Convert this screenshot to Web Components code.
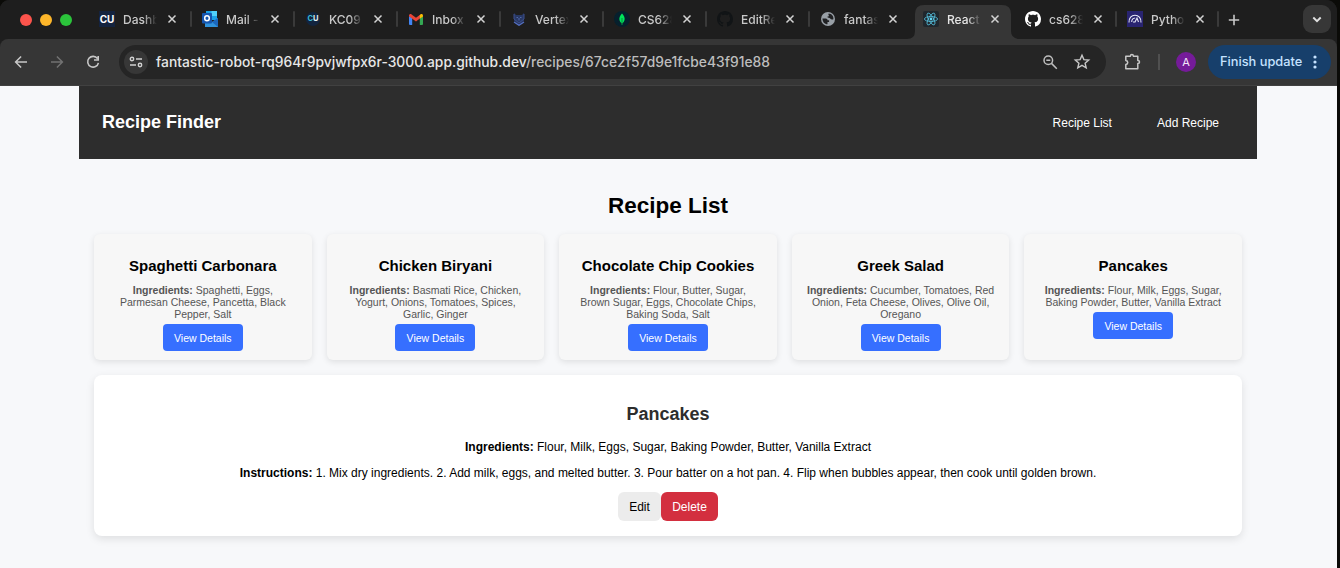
<!DOCTYPE html>
<html lang="en">
<head>
<meta charset="utf-8">
<title>Recipe Finder</title>
<style>
body{margin:0;background:#0b0b08;font-family:"Liberation Sans",Arial,sans-serif;overflow:hidden}
</style>
</head>
<body>
<browser-window></browser-window>
<script>
const define = (name, html) => customElements.define(name, class extends HTMLElement {
  constructor() {
    super();
    this.attachShadow({mode: 'open'});
  }
  connectedCallback() {
    const t = document.createElement('template');
    t.innerHTML = typeof html === 'function' ? html(this) : html;
    this.shadowRoot.replaceChildren(t.content.cloneNode(true));
  }
});

const github = fill => `<svg width="16" height="16" viewBox="0 0 16 16"><path fill="${fill}" d="M8 0C3.58 0 0 3.58 0 8c0 3.54 2.29 6.53 5.47 7.59.4.07.55-.17.55-.38 0-.19-.01-.82-.01-1.49-2.01.37-2.53-.49-2.69-.94-.09-.23-.48-.94-.82-1.13-.28-.15-.68-.52-.01-.53.63-.01 1.08.58 1.23.82.72 1.21 1.87.87 2.33.66.07-.52.28-.87.51-1.07-1.78-.2-3.64-.89-3.64-3.95 0-.87.31-1.59.82-2.15-.08-.2-.36-1.02.08-2.12 0 0 .67-.21 2.2.82.64-.18 1.32-.27 2-.27s1.36.09 2 .27c1.53-1.04 2.2-.82 2.2-.82.44 1.1.16 1.92.08 2.12.51.56.82 1.27.82 2.15 0 3.07-1.87 3.75-3.65 3.95.29.25.54.73.54 1.48 0 1.07-.01 1.93-.01 2.2 0 .21.15.46.55.38A8.01 8.01 0 0 0 16 8c0-4.42-3.58-8-8-8z"/></svg>`;

const favicons = {
  cu: `<div style="width:16px;height:16px;background:#14233f;color:#fff;font:700 10px/16px Inter,sans-serif;text-align:center;letter-spacing:-.2px">CU</div>`,
  cuRound: `<div style="width:14px;height:14px;border-radius:50%;background:#12243f;color:#e8f2f4;font:700 7.500px/14px Inter,sans-serif;text-align:center"><span style="color:#39b9d6">C</span>U</div>`,
  outlook: `<svg width="16" height="16" viewBox="0 0 16 16"><path fill="#1ba1e8" d="M4 0h11v9H4z"/><path fill="#50d0fb" d="M9.500 0h5.500v5h-5.500z"/><path fill="#0d5fb8" d="M4 5h5.500v5H4z"/><path fill="#2f93dc" d="M3 8l7 3 6-4v9H3z"/><path fill="#1c67bd" d="M10 11l6-4v9z"/><rect y="2" width="10" height="10.500" rx="1" fill="#1656af"/><ellipse cx="5" cy="7.200" rx="2.300" ry="2.500" fill="none" stroke="#fff" stroke-width="1.500"/></svg>`,
  gmail: `<svg width="14" height="11" viewBox="0 0 14 11"><path fill="#4285f4" d="M0 2l3.200 2.300V11H1a1 1 0 0 1-1-1z"/><path fill="#34a853" d="M14 2l-3.200 2.300V11H13a1 1 0 0 0 1-1z"/><path fill="#ea4335" d="M0 1.600C0 .2 1.500-.4 2.600.4L7 3.700 11.400.4l-.6 4.200L7 7.500 0 2.300z"/><path fill="#fbbc04" d="M10.800 1l.6-.5C12.500-.4 14 .2 14 1.600v.8l-3.200 2.300z"/></svg>`,
  vertex: `<svg width="12" height="13" viewBox="0 0 12 13" fill="none"><path d="M1 0l2 2h6l2-2v8l-5 4-5-4z" fill="#283864"/><path d="M1 9l5 3.300L11 9" stroke="#5570c4" stroke-width="1.300"/><path d="M1 1v5l5 4 5-4V1" stroke="#3c4f8c"/><path d="M3.500 4.500h1.500M7 4.500h1.500M6 5v2.500" stroke="#5268a8"/></svg>`,
  mongo: `<svg width="16" height="16"><circle cx="8" cy="8" r="8" fill="#06202d"/><path d="M8 2.500c4 4 3 8 0 10-3-2-4-6 0-10z" fill="#00e65b"/><path d="M8 7v7" stroke="#078b43"/></svg>`,
  githubDark: github('#111416'),
  github: github('#fff'),
  globe: `<svg width="14" height="14" viewBox="0 0 14 14"><circle cx="7" cy="7" r="7" fill="#989fa6"/><path d="M1.500 6.500h3.200c1.400 0 1.800.8 1.800 1.800h1.600v1.600H6.500v2.400c-3 0-5-2.500-5-5.800zM7.700 1.500c-.8 1.300.2 1.700.2 2.200 0 .8-1.500.5-1.500 1.300 0 1 2.200.3 2.800 1.500.6 1.100 1.800 1.200 3.200.8C12.800 4 10.500 1.600 7.700 1.500z" fill="#202123"/></svg>`,
  react: `<svg width="16" height="16"><rect width="16" height="16" rx="2" fill="#20272d"/><g fill="none" stroke="#53b9d6" stroke-width=".85"><ellipse cx="8" cy="8" rx="6.600" ry="2.500"/><ellipse cx="8" cy="8" rx="6.600" ry="2.500" transform="rotate(60 8 8)"/><ellipse cx="8" cy="8" rx="6.600" ry="2.500" transform="rotate(120 8 8)"/></g><circle cx="8" cy="8" r="1.400" fill="#63d4f2"/></svg>`,
  python: `<svg width="16" height="16"><path fill="#292471" d="M0 0h16v16H0z"/><g fill="none" stroke="#e8e8f7" stroke-width="1.100"><path d="M2 11.500C1.800 7 4.500 4.300 8 4.300s6.200 2.700 6 7.200M4.700 11c0-2.500 1.500-3.800 3.500-4M8 11l2-4 1.500 4M6 11h2.500"/></g></svg>`
};

define('browser-tab', el => `<style>
:host{display:block;width:103px;height:39px;flex:none;font:500 12px/39px Inter,sans-serif;color:#c9c9c9;position:relative}
:host([narrow]){width:102px}
.body{display:grid;grid-template-columns:16px 34px 10px;column-gap:8px;align-items:center;padding-left:11px;height:38px}
.icon{display:grid;place-items:center;width:16px;height:16px}
.icon svg,.x{display:block}
.x{margin-left:2px}
:host([icon="react"]) .x{margin-left:1px}
.title{white-space:nowrap;overflow:hidden;width:34px;-webkit-mask-image:linear-gradient(90deg,#000 60%,transparent 100%);mask-image:linear-gradient(90deg,#000 60%,transparent 100%)}
.sep{position:absolute;right:-1px;top:11px;width:2px;height:16px;border-radius:1px;background:#3a3a3a}
:host([nosep]) .sep{display:none}
.shape{position:absolute;left:-5px;top:4px;display:none}
:host([active]){color:#e6e6e6}
:host([active]) .shape{display:block}
:host([active]) .body{position:relative}
</style>
<svg class="shape" width="113" height="35"><path fill="#363636" d="M0 35Q8 35 8 27V10Q8 1 17 1H95Q104 1 104 10V27Q104 35 113 35z"/></svg>
<div class="body"><div class="icon">${favicons[el.getAttribute('icon')]}</div><div class="title">${el.getAttribute('label')}</div>
<svg class="x" width="10" height="10"><path d="M1.500 1.500l7 7m0-7l-7 7" stroke="#d3d3d3" stroke-width="1.500"/></svg></div><div class="sep"></div>`);

define('tab-strip', `<style>
:host{display:flex;height:39px;background:#1e1e1e;border-radius:9px 11px 0 0;align-items:center}
.lights{display:flex;gap:8px;padding-left:20px;width:68px;flex:none}
.lights i{width:12px;height:12px;border-radius:50%}
.plus{margin-left:10px}
.drop{margin-left:auto;margin-right:6px;width:28px;height:28px;border-radius:9px;background:#373737;display:grid;place-items:center;margin-top:-1px}
</style>
<div class="lights"><i style="background:#fc544c"></i><i style="background:#fdb62a"></i><i style="background:#2bc43b"></i></div>
<browser-tab icon="cu" label="Dashb"></browser-tab>
<browser-tab icon="outlook" label="Mail -"></browser-tab>
<browser-tab icon="cuRound" label="KC09"></browser-tab>
<browser-tab icon="gmail" label="Inbox"></browser-tab>
<browser-tab icon="vertex" label="Vertex"></browser-tab>
<browser-tab icon="mongo" label="CS628"></browser-tab>
<browser-tab icon="githubDark" label="EditRe"></browser-tab>
<browser-tab icon="globe" label="fantas" nosep></browser-tab>
<browser-tab icon="react" label="React" active narrow nosep></browser-tab>
<browser-tab icon="github" label="cs628" narrow></browser-tab>
<browser-tab icon="python" label="Pytho" narrow></browser-tab>
<svg class="plus" width="12" height="12"><path d="M6 .8v10.400M.8 6h10.400" stroke="#c9c9c9" stroke-width="1.600"/></svg>
<div class="drop"><svg width="10" height="7"><path d="M1.300 1.500L5 5.200l3.700-3.700" fill="none" stroke="#e0e0e0" stroke-width="1.900"/></svg></div>`);

define('address-bar', `<style>
:host{display:flex;box-sizing:border-box;height:47px;padding:0 6px 1px 11px;background:#363636;border-bottom:1px solid #414141;align-items:center;font:500 13.800px/34px Inter,sans-serif;border-radius:8px 8px 0 0}
svg{display:block;flex:none}
.nav{display:flex;gap:16px;width:108px;flex:none}
.omni{display:flex;align-items:center;box-sizing:border-box;width:987px;height:34px;border-radius:17px;background:#252525;padding:0 13px 0 5px;flex:none}
.site{width:24px;height:24px;border-radius:50%;background:#373737;display:grid;place-items:center;margin-right:8px}
.url{color:#e7e7e7;white-space:nowrap;flex:1;letter-spacing:.025px}
.url span{color:#bdbdbd}
.tools{display:flex;gap:10px}
.sep{width:2px;height:16px;background:#505050;margin-left:16px}
.me{width:20px;height:20px;border-radius:50%;background:#751b99;color:#f4e6fa;font:400 11px/20px Inter,sans-serif;text-align:center;margin-left:16px}
.update{box-sizing:border-box;margin-left:auto;display:flex;align-items:center;justify-content:space-between;width:123px;height:34px;border-radius:17px;background:#173f6b;color:#c5e2ff;padding:0 14px 0 12px;font-size:12.800px;white-space:nowrap}
</style>
<div class="nav">
<svg width="20" height="20" viewBox="0 0 20 20" fill="none" stroke="#c7c7c7" stroke-width="1.500"><path d="M16 10H4.800m5.300-5.500L4.600 10l5.500 5.500"/></svg>
<svg width="20" height="20" viewBox="0 0 20 20" fill="none" stroke="#727272" stroke-width="1.500"><path d="M4 10h11.200M9.900 4.500l5.500 5.500-5.500 5.500"/></svg>
<svg width="20" height="20" viewBox="0 0 20 20" fill="none" stroke="#c7c7c7" stroke-width="1.600"><path d="M14.500 6.600A5.400 5.400 0 1 0 15.400 10.800M15.200 4v4h-4.200"/></svg>
</div>
<div class="omni"><div class="site"><svg width="14" height="12" fill="none" stroke="#d2d2d2" stroke-width="1.400"><circle cx="3" cy="3" r="1.700"/><path d="M7 3h6M1 9h6"/><circle cx="11" cy="9" r="1.700"/></svg></div>
<div class="url">fantastic-robot-rq964r9pvjwfpx6r-3000.app.github.dev<span>/recipes/67ce2f57d9e1fcbe43f91e88</span></div>
<div class="tools">
<svg width="20" height="20" viewBox="0 0 20 20" fill="none" stroke="#bebebe" stroke-width="1.500"><circle cx="8.300" cy="8.200" r="4.300"/><path d="M6.300 8.200h4M11.500 11.400l5.300 5.300"/></svg>
<svg style="margin-left:3px" width="20" height="20" viewBox="0 0 20 20" fill="none" stroke="#c7c7c7" stroke-width="1.400"><path d="M9 3.200l1.900 4.400 4.800.4-3.600 3.200 1.100 4.700L9 13.400l-4.200 2.500 1.100-4.700L2.300 8l4.800-.4z"/></svg></div></div>
<svg style="margin-left:18px" width="18" height="20" viewBox="0 0 18 20" fill="none" stroke="#c7c7c7" stroke-width="1.500"><path d="M1.800 4.200h4.600C6.400 2 9.400 2 9.400 4.200h4.400v4.300c2.300 0 2.300 3 0 3v5.200h-12v-4.200c2.600-.3 2.600-3.700 0-4z" stroke-linejoin="round"/></svg>
<div class="sep"></div><div class="me">A</div>
<div class="update"><span>Finish update</span><svg width="4" height="16" fill="#c5e2ff"><circle cx="2" cy="3" r="1.600"/><circle cx="2" cy="8" r="1.600"/><circle cx="2" cy="13" r="1.600"/></svg></div>`);

define('site-header', `<style>
:host{display:flex;box-sizing:border-box;height:73px;background:#2d2d2d;color:#fff;align-items:center;padding:0 38px 0 23px}
h1{font-size:18px;line-height:20px;margin:0 auto 1px 0}
nav{display:flex;gap:45px;font-size:12px;line-height:14px;padding-top:1px}
</style><h1>Recipe Finder</h1><nav><span>Recipe List</span><span>Add Recipe</span></nav>`);

define('recipe-card', `<style>
:host{display:block;box-sizing:border-box;height:126px;padding:23px 14.900px 0;background:#f7f7f7;border-radius:6px;box-shadow:0 2px 6px rgba(0,0,0,.1);text-align:center}
h3{font-size:15px;line-height:17px;margin:0 -8px 10px}
p{font-size:10.500px;line-height:12px;margin:0 0 4px;color:#555}
button{display:block;margin:0 auto;border:0;width:80px;height:27px;padding:1px 0 0;border-radius:4px;background:#366fff;color:#fff;font:10.500px/12px "Liberation Sans",Arial,sans-serif}
</style><h3><slot name="name"></slot></h3><p><b>Ingredients:</b> <slot></slot></p><button>View Details</button>`);

define('recipe-detail', `<style>
:host{display:block;box-sizing:border-box;height:161px;margin-top:15px;padding-top:29px;background:#fff;border-radius:8px;box-shadow:0 3px 8px rgba(0,0,0,.1);text-align:center;font-size:12px;line-height:14px;color:#000}
h2{font-size:18px;line-height:20px;margin:0 0 16px;color:#2d2d2d}
p{margin:0 0 12px}
div{display:flex;justify-content:center}
button{border:0;height:29px;padding:1px 0 0;width:43px;border-radius:6px;background:#ececec;color:#000;font:12px "Liberation Sans",Arial,sans-serif}
.del{width:57px;background:#d32f3f;color:#fff}
</style><h2>Pancakes</h2><p><b>Ingredients:</b> Flour, Milk, Eggs, Sugar, Baking Powder, Butter, Vanilla Extract</p>
<p><b>Instructions:</b> 1. Mix dry ingredients. 2. Add milk, eggs, and melted butter. 3. Pour batter on a hot pan. 4. Flip when bubbles appear, then cook until golden brown.</p>
<div><button>Edit</button><button class="del">Delete</button></div>`);

define('recipe-page', `<style>
:host{display:block;height:482px;background:#f7f8fa;overflow:hidden}
.wrap{width:1178px;margin-left:79px}
main{padding:34px 15px 0}
h2{font-size:22.500px;line-height:26px;margin:0 0 15px;text-align:center;color:#000}
.grid{display:grid;grid-template-columns:repeat(5,1fr);gap:15px}
</style><div class="wrap"><site-header></site-header><main><h2>Recipe List</h2><div class="grid">
<recipe-card><span slot="name">Spaghetti Carbonara</span>Spaghetti, Eggs, Parmesan Cheese, Pancetta, Black Pepper, Salt</recipe-card>
<recipe-card><span slot="name">Chicken Biryani</span>Basmati Rice, Chicken, Yogurt, Onions, Tomatoes, Spices, Garlic, Ginger</recipe-card>
<recipe-card><span slot="name">Chocolate Chip Cookies</span>Flour, Butter, Sugar, Brown Sugar, Eggs, Chocolate Chips, Baking Soda, Salt</recipe-card>
<recipe-card><span slot="name">Greek Salad</span>Cucumber, Tomatoes, Red Onion, Feta Cheese, Olives, Olive Oil, Oregano</recipe-card>
<recipe-card><span slot="name">Pancakes</span>Flour, Milk, Eggs, Sugar, Baking Powder, Butter, Vanilla Extract</recipe-card>
</div><recipe-detail></recipe-detail></main></div>`);

define('browser-window', `<style>:host{display:block;width:1337px;height:568px}
.chrome{background:#1e1e1e;border-radius:9px 11px 0 0}</style>
<div class="chrome"><tab-strip></tab-strip><address-bar></address-bar></div><recipe-page></recipe-page>`);
</script>
</body>
</html>
